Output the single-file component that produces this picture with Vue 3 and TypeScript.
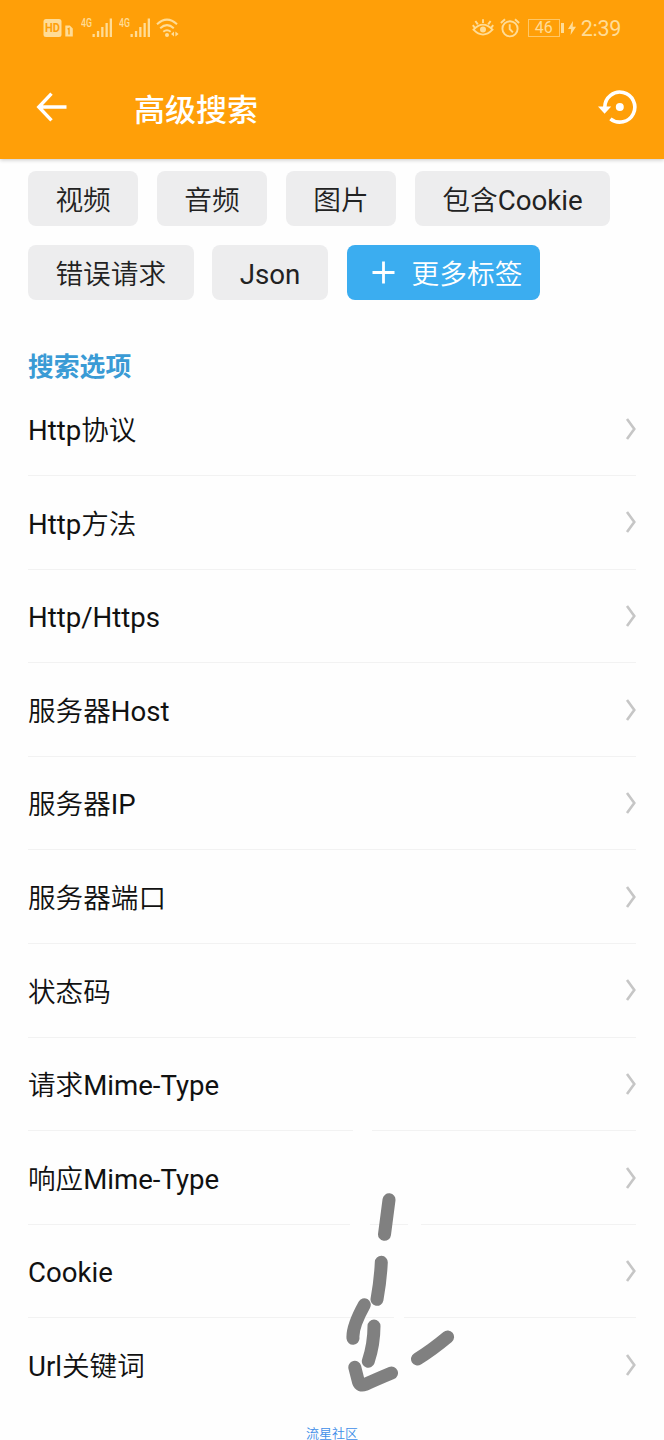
<script setup lang="ts">
const tagRows: string[][] = [
  ['视频', '音频', '图片', '包含Cookie'],
  ['错误请求', 'Json'],
]
const options: string[] = [
  'Http协议', 'Http方法', 'Http/Https', '服务器Host', '服务器IP', '服务器端口',
  '状态码', '请求Mime-Type', '响应Mime-Type', 'Cookie', 'Url关键词',
]
const signals = [0, 1]
</script>

<template>
  <div class="screen">
    <header class="top">
      <div class="status">
        <div class="status-left">
          <svg class="hd" width="30" height="20" viewBox="0 0 30 20">
            <rect x="0.5" y="1" width="18" height="18" rx="2.5" fill="#ffdc96" />
            <text x="9.5" y="14.3" text-anchor="middle" textLength="15" lengthAdjust="spacingAndGlyphs" font-size="12" font-weight="700" fill="#ff9f08">HD</text>
            <path d="M22.3 7.5h4.5l3 3V18.5h-7.5z" fill="#ffdc96" />
            <path d="M24.6 11.2l1.4-.8v6" fill="none" stroke="#ff9f08" stroke-width="1.4" />
          </svg>
          <div v-for="s in signals" :key="s" class="signal">
            <svg width="33" height="24" viewBox="0 -2 33 24" fill="#ffdc96">
              <text x="0" y="9.4" font-size="12" font-weight="500" textLength="11" lengthAdjust="spacingAndGlyphs">4G</text>
              <rect x="11.5" y="16" width="2.3" height="3" /><rect x="15.9" y="13" width="2.3" height="6" />
              <rect x="20.2" y="9" width="2.3" height="10" /><rect x="24.5" y="5" width="2.3" height="14" />
              <rect x="28.7" y="0.5" width="2.3" height="18.5" />
            </svg>
          </div>
          <svg class="wifi" width="24" height="20" viewBox="0 0 24 20" fill="none" stroke="#ffdc96" stroke-width="2">
            <path d="M1 6.2Q11 -3 21 6.2M4.2 10.2Q11 4 17.8 10.2M7.3 13.7Q11 10.7 14.7 13.7" />
            <circle cx="11" cy="17" r="2" fill="#ffdc96" stroke="none" />
            <path d="M18 13.6v5l-3-2.5zM19.4 13.6v5l3.2-2.5z" fill="#ffdc96" stroke="none" />
          </svg>
        </div>
        <div class="status-right">
          <svg width="22" height="20" viewBox="0 0 22 20" fill="none" stroke="#ffdc96" stroke-width="1.9">
            <path d="M1.5 11.7Q11 1.5 20.5 11.7Q11 21.5 1.5 11.7zM11 5V1.2M5.8 6.4L3.4 3M16.2 6.4L18.6 3M2.7 9.6L.8 7.2M19.3 9.6l1.9-2.4" />
            <circle cx="11" cy="11.6" r="3" fill="#ffdc96" stroke="none" />
          </svg>
          <svg class="alarm" width="20" height="20" viewBox="0 0 20 20" fill="none" stroke="#ffdc96" stroke-width="1.9">
            <circle cx="10" cy="10.8" r="7.6" /><path d="M9.7 6.3V11l3.2 3.3M.9 5L5 1.3M19.1 5L15 1.3" />
          </svg>
          <span class="battery">46</span><i class="cap"></i>
          <svg class="bolt" width="8" height="14" viewBox="0 0 8 14" fill="#ffdc96"><path d="M5 0L0 8h3.2L2.6 14L8 5.8H4.7z" /></svg>
          <span class="time">2:39</span>
        </div>
      </div>
      <div class="bar">
        <svg class="back" width="32" height="30" viewBox="0 0 32 30" fill="none" stroke="#fff" stroke-width="3.4">
          <path d="M15.5 1.7L2.8 15L15.5 28.3M3 15H30.5" />
        </svg>
        <h1>高级搜索</h1>
        <svg class="restore" width="39" height="36" viewBox="0 0 39 36" fill="none">
          <path d="M6.8 18A15 15 0 1 1 12.4 29.8" stroke="#fff" stroke-width="3.6" />
          <path d="M0 17.6h13.2L6.6 24.8z" fill="#fff" /><circle cx="21.8" cy="18" r="4" fill="#fff" />
        </svg>
      </div>
    </header>
    <main>
      <section class="tags">
        <div v-for="(row, i) in tagRows" :key="i" class="tag-row">
          <span v-for="t in row" :key="t" class="tag">{{ t }}</span>
          <span v-if="i === 1" class="tag more">
            <svg width="23" height="23" viewBox="0 0 23 23" stroke="#fff" stroke-width="2.8"><path d="M11.5 .5v22M.5 11.5h22" /></svg>
            <span class="more-label">更多标签</span>
          </span>
        </div>
      </section>
      <h2>搜索选项</h2>
      <ul>
        <li v-for="o in options" :key="o">
          <span class="label">{{ o }}</span>
          <svg width="11" height="24" viewBox="0 0 11 24" fill="none" stroke="#c6c6c6" stroke-width="2.6"><path d="M2 2L9.3 12L2 22" /></svg>
        </li>
      </ul>
    </main>
    <footer>流星社区</footer>
    <svg class="sketch" width="180" height="330" viewBox="0 0 180 330" fill="none" stroke-linecap="round" stroke-linejoin="round">
      <path d="M33 21H52M30 114H50M88 114H101M74 207.5H84" stroke="#fefefe" stroke-width="8" stroke-linecap="butt" />
      <path d="M69 89.8L64.5 124.3M61.3 152.3Q60.5 170 57 189.3M44.3 194.8Q32 217 33 228.3M54 216Q54 234 48.3 251.3M34.8 257.3L38.5 272Q40 276.5 45 274.5Q56 269.5 71.5 263M97.5 249Q112 240 127.6 227" stroke="#808080" stroke-width="13" />
    </svg>
  </div>
</template>

<style>
body { margin: 0; background: #fff; }
</style>
<style scoped>
.screen { position: relative; width: 664px; height: 1440px; overflow: hidden; background: #fefefe; color: #111; font-family: Roboto, "Noto Sans CJK SC DemiLight", "Noto Sans CJK SC", sans-serif; display: flex; flex-direction: column; }
.top { height: 158.5px; flex: none; background: #ff9f08; box-shadow: 0 1px 4px rgba(0,0,0,.22); }
.status { height: 56px; box-sizing: border-box; padding: 0 43px; display: flex; justify-content: space-between; align-items: center; color: #ffdc96; }
.status-left, .status-right { display: flex; align-items: center; }
.signal { display: flex; margin-left: 8px; }
.signal + .signal { margin-left: 4.5px; }
.wifi { margin-left: 4px; }
.alarm { margin-left: 6px; }
.battery { margin-left: 8px; box-sizing: border-box; width: 32px; height: 18px; border: 1.4px solid #ffc766; font-size: 16px; line-height: 16px; text-align: center; }
.cap { width: 3px; height: 10px; margin-left: 1px; background: #ffdc96; }
.bolt { margin: 0 5px 0 4px; }
.time { font-size: 21.5px; letter-spacing: -.3px; }
.bar { height: 102px; box-sizing: border-box; display: flex; align-items: center; padding: 0 27px 0 36px; color: #fff; }
.back { margin-right: 66px; }
h1 { margin: 2px auto 0 0; font-size: 31px; line-height: 40px; font-weight: 500; font-family: "Noto Sans CJK SC", sans-serif; }
main { display: block; }
.tags { padding: 12px 28px 0; display: flex; flex-direction: column; gap: 18.8px; }
.tag-row { display: flex; gap: 18.8px; }
.tag { height: 55.6px; line-height: 60px; box-sizing: border-box; padding: 0 27.4px; border-radius: 8px; background: #ededee; color: #222; font-size: 27.7px; white-space: nowrap; }
.more { display: flex; align-items: center; gap: 17px; background: #3badf0; color: #fff; padding: 0 18px 0 25px; }
.more-label { line-height: 40px; padding-top: 5px; }
h2 { margin: 48px 28px 0; font-size: 25.8px; line-height: 34px; font-weight: 700; color: #3a9bd5; font-family: "Noto Sans CJK SC", sans-serif; }
ul { list-style: none; margin: 0 28px; padding: 0; }
li { height: 93.6px; box-sizing: border-box; display: flex; justify-content: space-between; align-items: center; border-bottom: 1.4px solid #f2f2f2; font-size: 27.6px; color: #111; }
li:last-child { border: 0; }
.label { line-height: 36px; padding-top: 4.5px; }
footer { position: absolute; left: 0; right: 0; top: 1425px; text-align: center; font-size: 13px; line-height: 17px; color: #3f8ee8; }
.sketch { position: absolute; left: 320px; top: 1110px; }
</style>
